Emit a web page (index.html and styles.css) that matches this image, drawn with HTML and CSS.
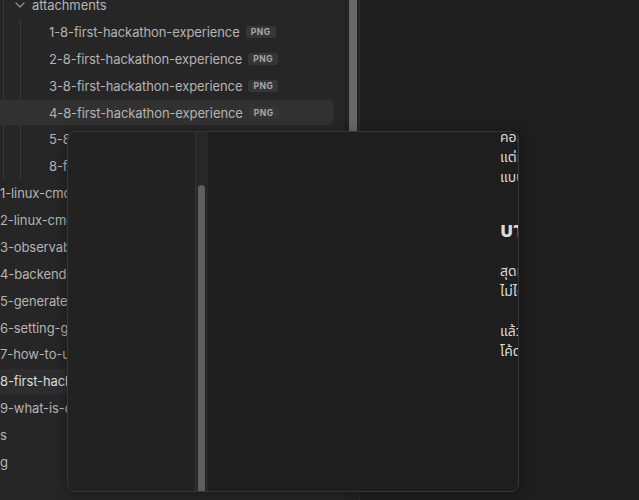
FILE: index.html
```html
<!DOCTYPE html>
<html lang="th">
<head>
<meta charset="utf-8">
<title>Vault</title>
<link rel="stylesheet" href="styles.css">
</head>
<body>
<div class="app">
  <aside class="sidebar">
    <div class="tree">
      <div class="group g1">
        <div class="row folder">
          <svg class="chev" width="10" height="6" viewBox="0 0 10 6"><path d="M1 1 L5 5 L9 1" fill="none" stroke="#8a8a8a" stroke-width="1.4" stroke-linecap="round" stroke-linejoin="round"/></svg>
          <span class="name">attachments</span>
        </div>
        <div class="group g2">
          <div class="row child"><span class="name">1-8-first-hackathon-experience</span><span class="badge">PNG</span></div>
          <div class="row child"><span class="name">2-8-first-hackathon-experience</span><span class="badge">PNG</span></div>
          <div class="row child"><span class="name">3-8-first-hackathon-experience</span><span class="badge">PNG</span></div>
          <div class="row child hover"><span class="name">4-8-first-hackathon-experience</span><span class="badge">PNG</span></div>
          <div class="row child"><span class="name">5-8-first-hackathon-experience</span><span class="badge">PNG</span></div>
          <div class="row child"><span class="name">8-first-hackathon-experience</span><span class="badge">PNG</span></div>
        </div>
      </div>
      <div class="row root"><span class="name">1-linux-cmd-basics</span></div>
      <div class="row root"><span class="name">2-linux-cmd-advanced</span></div>
      <div class="row root"><span class="name">3-observability</span></div>
      <div class="row root"><span class="name">4-backend-roadmap</span></div>
      <div class="row root"><span class="name">5-generate-ssh-key</span></div>
      <div class="row root"><span class="name">6-setting-git</span></div>
      <div class="row root"><span class="name">7-how-to-use-obsidian</span></div>
      <div class="row root active"><span class="name">8-first-hackathon-experience</span></div>
      <div class="row root"><span class="name">9-what-is-docker</span></div>
      <div class="row root"><span class="name">s</span></div>
      <div class="row root"><span class="name">g</span></div>
    </div>
  </aside>
  <div class="vscroll"><div class="vthumb"></div></div>
  <main class="editor"></main>
</div>

<div class="popover">
  <div class="pv-side"></div>
  <div class="pv-track"><div class="pv-thumb"></div></div>
  <div class="pv-page">
    <div class="doc">
      <p>คอมพิวเตอร์ที่ใช้ในงานแข่งขัน<br>แต่ทีมของเราก็ยังไม่ยอมแพ้<br>แบบนี้ก็ถือว่าเป็นประสบการณ์ที่ดี</p>
      <h2>บางอย่างที่ได้เรียนรู้</h2>
      <p>สุดท้ายแล้วผลลัพธ์อาจจะ<br>ไม่ได้ออกมาอย่างที่หวังไว้</p>
      <p>แล้วก็ได้เพื่อนใหม่หลายคน<br>โค้ดที่เขียนก็ยังใช้งานได้</p>
    </div>
  </div>
</div>
</body>
</html>
```

FILE: styles.css
```css
html, body {
  margin: 0;
  padding: 0;
}
body {
  background: #1e1e1e;
  font-family: Inter, "Noto Sans", "Noto Sans Thai", sans-serif;
  overflow: hidden;
  width: 639px;
  height: 500px;
}
.app {
  display: flex;
  height: 500px;
}
.sidebar {
  width: 345px;
  flex: none;
  background: #262626;
  overflow: hidden;
}
.tree {
  width: 333px;
  margin-top: -7.5px;
}
.group {
  border-left: 1px solid #383838;
}
.g1 {
  margin-left: 3px;
}
.g2 {
  margin-left: 16px;
}
.row {
  height: 25px;
  margin-bottom: 1.875px;
  display: flex;
  align-items: center;
  color: #b4b4b4;
  font-size: 13px;
  letter-spacing: -0.1px;
  white-space: nowrap;
  border-radius: 0 4px 4px 0;
  box-sizing: border-box;
}
.folder {
  margin-left: -4px;
  padding-left: 15px;
}
.chev {
  margin-right: 7px;
  flex: none;
}
.child {
  margin-left: -21px;
  padding-left: 49px;
}
.root {
  padding-left: 0;
}
.hover {
  background: #313131;
}
.active {
  background: #2d2d2d;
  color: #dcdcdc;
}
.badge {
  margin-left: 6px;
  background: #363636;
  color: #a8a8a8;
  font-size: 8.5px;
  font-weight: 700;
  letter-spacing: 0.06em;
  line-height: 12px;
  padding: 0 5px;
  border-radius: 3px;
}
.vscroll {
  width: 15px;
  flex: none;
  box-sizing: border-box;
  background: #232323;
  border-left: 1px solid #1b1b1b;
  border-right: 1px solid #2c2c2c;
  padding-left: 3px;
}
.vthumb {
  width: 8px;
  height: 300px;
  background: #676767;
}
.editor {
  flex: 1;
  background: #1e1e1e;
}
.popover {
  position: absolute;
  left: 67px;
  top: 131px;
  width: 452px;
  height: 361px;
  box-sizing: border-box;
  border: 1px solid #363636;
  border-radius: 8px;
  overflow: hidden;
  display: flex;
  box-shadow: 0 3px 14px rgba(0, 0, 0, 0.35);
}
.pv-side {
  width: 127px;
  flex: none;
  background: #222222;
  border-right: 1px solid #353535;
}
.pv-track {
  width: 12px;
  flex: none;
  background: #272727;
  padding-left: 2px;
  box-sizing: border-box;
  padding-top: 53px;
}
.pv-thumb {
  width: 7px;
  height: 400px;
  background: #5e5e5e;
  border-radius: 4px 4px 0 0;
}
.pv-page {
  flex: 1;
  background: #1e1e1e;
  overflow: hidden;
  padding-left: 292px;
}
.doc {
  margin-top: -5px;
  color: #dadada;
  font-size: 14px;
  line-height: 20px;
  white-space: nowrap;
}
.doc p {
  margin: 0 0 20px;
}
.doc h2 {
  margin: 31px 0 19px;
  font-size: 21px;
  line-height: 24px;
  font-weight: 700;
}
```
